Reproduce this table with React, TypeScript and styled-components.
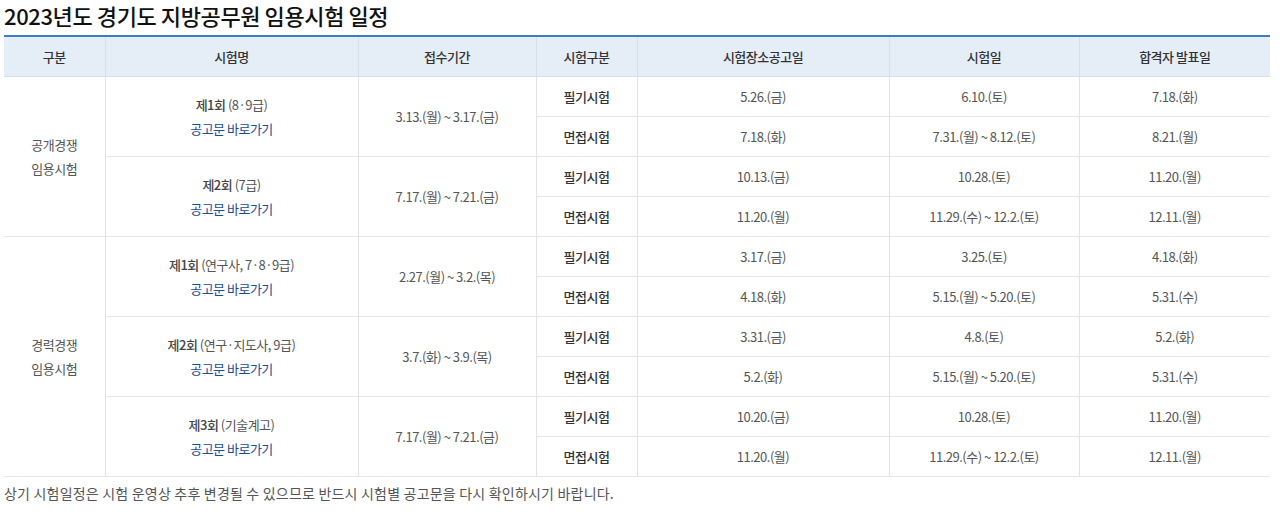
import React from "react";
import styled, { createGlobalStyle } from "styled-components";

const Global = createGlobalStyle`
  html, body { margin: 0; padding: 0; background: #fff; }
  body { font-family: "Noto Sans CJK KR", "Noto Sans", sans-serif; color: #555; }
`;

const Page = styled.div`
  padding: 0 10px 0 4px;
`;

const Title = styled.h2`
  margin: 0;
  height: 30px;
  font-size: 22px;
  line-height: 30px;
  font-weight: 500;
  color: #111;
  letter-spacing: -0.4px;
`;

const Table = styled.table`
  margin-top: 5px;
  width: 100%;
  border-collapse: collapse;
  table-layout: fixed;
  border-top: 2px solid #3d7cc4;
  font-size: 13px;
  letter-spacing: -0.5px;
`;

const Th = styled.th`
  height: 39px;
  padding: 0;
  background: #e5edf6;
  color: #333;
  font-weight: 500;
  text-align: center;
  border-left: 1px solid #d6dfea;
  border-bottom: 1px solid #d6dfea;
  &:first-child { border-left: none; }
`;

const Td = styled.td<{ $strong?: boolean; $first?: boolean }>`
  height: 39px;
  padding: 0;
  text-align: center;
  color: ${(p) => (p.$strong ? "#333" : "#555")};
  font-weight: ${(p) => (p.$strong ? 500 : 400)};
  border-left: ${(p) => (p.$first ? "none" : "1px solid #e2e2e2")};
  border-bottom: 1px solid #e6e6e6;
  line-height: 24px;
`;

const Round = styled.b`
  font-weight: 500;
  color: #444;
`;

const Link = styled.a`
  display: block;
  color: #1d4b8f;
  text-decoration: none;
`;

const Note = styled.p`
  margin: 6px 0 0;
  font-size: 14px;
  color: #555;
  letter-spacing: 0.2px;
`;

type Sub = { kind: string; place: string; exam: string; result: string };
type Exam = { round: string; detail: string; period: string; rows: Sub[] };
type Group = { label: string[]; exams: Exam[] };

const data: Group[] = [
  {
    label: ["공개경쟁", "임용시험"],
    exams: [
      {
        round: "제1회",
        detail: "(8·9급)",
        period: "3.13.(월) ~ 3.17.(금)",
        rows: [
          { kind: "필기시험", place: "5.26.(금)", exam: "6.10.(토)", result: "7.18.(화)" },
          { kind: "면접시험", place: "7.18.(화)", exam: "7.31.(월) ~ 8.12.(토)", result: "8.21.(월)" },
        ],
      },
      {
        round: "제2회",
        detail: "(7급)",
        period: "7.17.(월) ~ 7.21.(금)",
        rows: [
          { kind: "필기시험", place: "10.13.(금)", exam: "10.28.(토)", result: "11.20.(월)" },
          { kind: "면접시험", place: "11.20.(월)", exam: "11.29.(수) ~ 12.2.(토)", result: "12.11.(월)" },
        ],
      },
    ],
  },
  {
    label: ["경력경쟁", "임용시험"],
    exams: [
      {
        round: "제1회",
        detail: "(연구사, 7·8·9급)",
        period: "2.27.(월) ~ 3.2.(목)",
        rows: [
          { kind: "필기시험", place: "3.17.(금)", exam: "3.25.(토)", result: "4.18.(화)" },
          { kind: "면접시험", place: "4.18.(화)", exam: "5.15.(월) ~ 5.20.(토)", result: "5.31.(수)" },
        ],
      },
      {
        round: "제2회",
        detail: "(연구·지도사, 9급)",
        period: "3.7.(화) ~ 3.9.(목)",
        rows: [
          { kind: "필기시험", place: "3.31.(금)", exam: "4.8.(토)", result: "5.2.(화)" },
          { kind: "면접시험", place: "5.2.(화)", exam: "5.15.(월) ~ 5.20.(토)", result: "5.31.(수)" },
        ],
      },
      {
        round: "제3회",
        detail: "(기술계고)",
        period: "7.17.(월) ~ 7.21.(금)",
        rows: [
          { kind: "필기시험", place: "10.20.(금)", exam: "10.28.(토)", result: "11.20.(월)" },
          { kind: "면접시험", place: "11.20.(월)", exam: "11.29.(수) ~ 12.2.(토)", result: "12.11.(월)" },
        ],
      },
    ],
  },
];

const widths = [101, 253, 178, 101, 252, 190, 191];
const heads = ["구분", "시험명", "접수기간", "시험구분", "시험장소공고일", "시험일", "합격자 발표일"];

export default function App() {
  return (
    <Page>
      <Global />
      <Title>2023년도 경기도 지방공무원 임용시험 일정</Title>
      <Table>
        <colgroup>
          {widths.map((w, i) => (
            <col key={i} style={{ width: w }} />
          ))}
        </colgroup>
        <thead>
          <tr>
            {heads.map((h) => (
              <Th key={h}>{h}</Th>
            ))}
          </tr>
        </thead>
        <tbody>
          {data.map((g) =>
            g.exams.map((e, ei) =>
              e.rows.map((r, ri) => (
                <tr key={g.label[0] + e.round + r.kind}>
                  {ei === 0 && ri === 0 && (
                    <Td $first rowSpan={g.exams.length * 2}>
                      {g.label[0]}
                      <br />
                      {g.label[1]}
                    </Td>
                  )}
                  {ri === 0 && (
                    <Td rowSpan={2}>
                      <Round>{e.round}</Round> {e.detail}
                      <Link href="#">공고문 바로가기</Link>
                    </Td>
                  )}
                  {ri === 0 && <Td rowSpan={2}>{e.period}</Td>}
                  <Td $strong>{r.kind}</Td>
                  <Td>{r.place}</Td>
                  <Td>{r.exam}</Td>
                  <Td>{r.result}</Td>
                </tr>
              ))
            )
          )}
        </tbody>
      </Table>
      <Note>상기 시험일정은 시험 운영상 추후 변경될 수 있으므로 반드시 시험별 공고문을 다시 확인하시기 바랍니다.</Note>
    </Page>
  );
}
